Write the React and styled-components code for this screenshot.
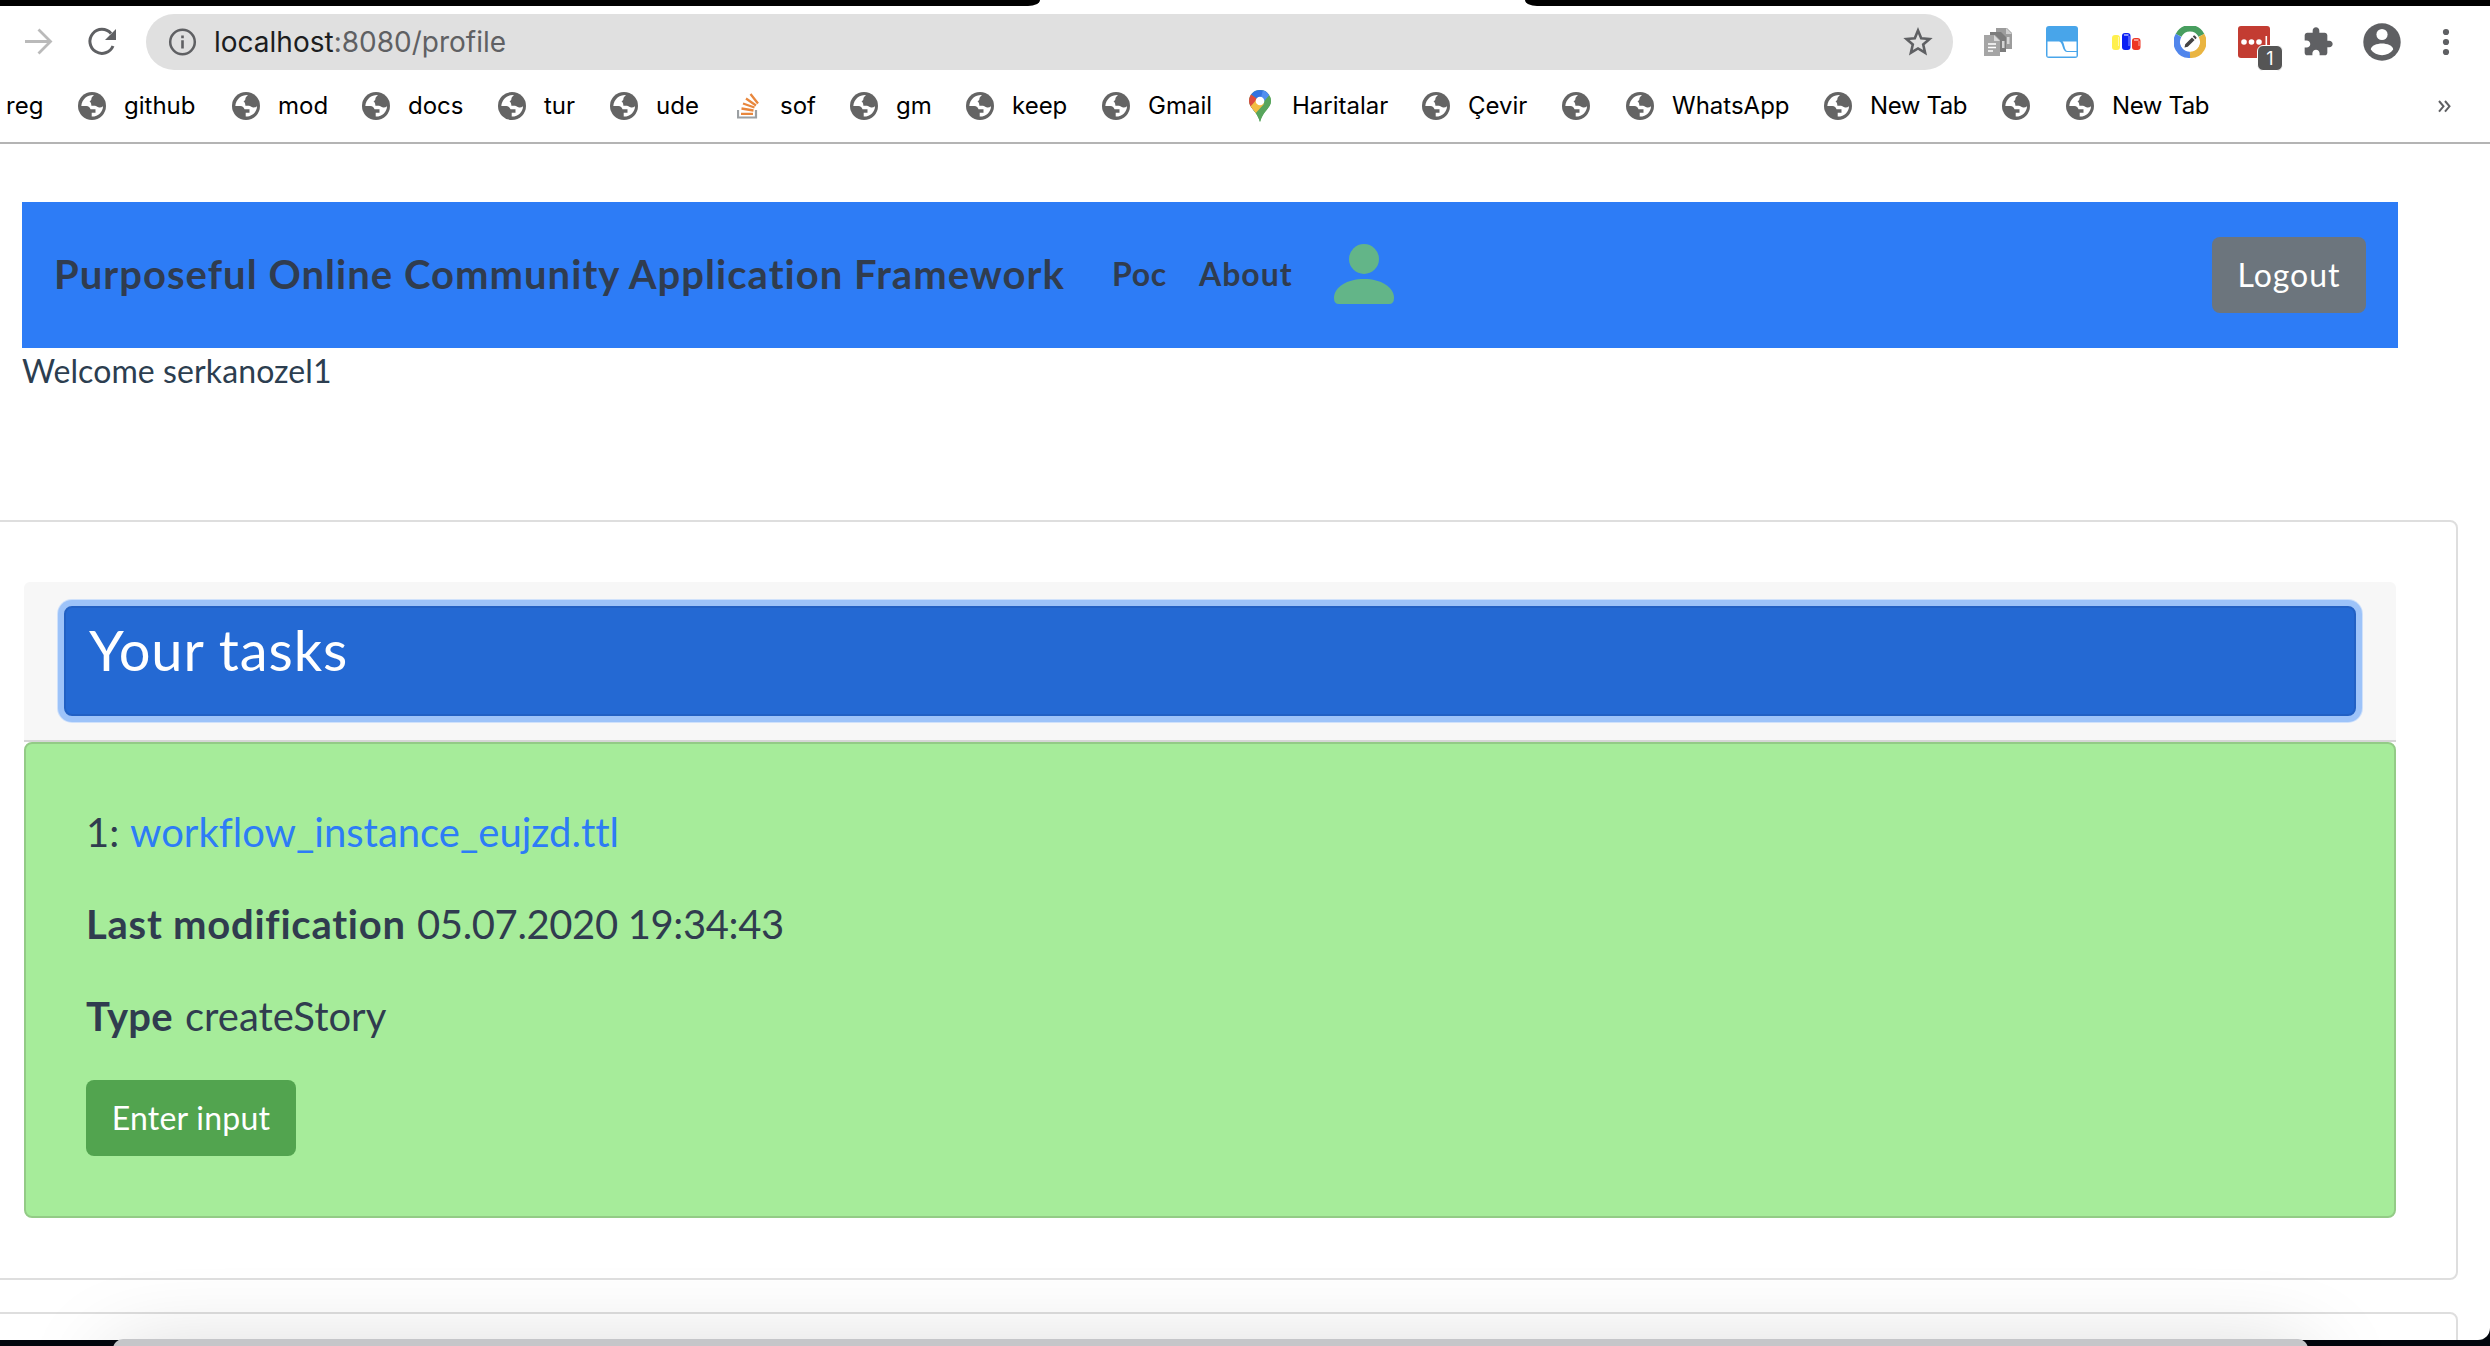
import React from "react";
import styled, { createGlobalStyle, css } from "styled-components";

const GlobalStyle = createGlobalStyle`
  * { box-sizing: border-box; }
  html, body { margin: 0; padding: 0; background: #000; overflow: hidden; }
  p, h1, h2 { margin: 0; font-weight: 400; }
  svg { display: block; flex: none; }
`;

const chromeFont = css`font-family: Inter, "Liberation Sans", sans-serif;`;
const pageFont = css`
  font-family: Lato, "Open Sans", sans-serif;
  font-variant-ligatures: none;
`;

const Screen = styled.div`
  position: relative;
  width: 2490px;
  height: 1346px;
  overflow: hidden;
  background: #02060d;
`;
const Browser = styled.div`
  height: 1340px;
  overflow: hidden;
  background: #fff;
  border-bottom-right-radius: 12px;
`;
const TabStrip = styled.div`
  display: flex;
  justify-content: space-between;
  height: 6px;
`;
const StripPart = styled.div`
  width: ${(p) => p.$w}px;
  background: #000;
  border-radius: ${(p) => (p.$left ? "0 0 12px 0 / 0 0 6px 0" : "0 0 0 12px / 0 0 0 6px")};
`;
const Toolbar = styled.div`
  display: flex;
  align-items: center;
  height: 72px;
`;
const NavButtons = styled.div`
  display: flex;
  align-items: center;
  width: 146px;
  padding-left: 22px;
  gap: 32px;
`;
const AddressBar = styled.div`
  ${chromeFont}
  display: flex;
  align-items: center;
  width: 1807px;
  height: 56px;
  padding: 0 19px 0 22px;
  border-radius: 28px;
  background: #e0e0e0;
  font-size: 28px;
  color: #5f6063;
`;
const Url = styled.div`
  flex: 1;
  padding-left: 17px;
  span { color: #1c1d20; }
`;
const Extensions = styled.div`
  display: flex;
  align-items: center;
  padding-left: 27px;
  gap: 28px;
`;
const ExtensionSlot = styled.div`
  position: relative;
  display: flex;
  align-items: center;
  justify-content: center;
  width: 36px;
  height: 38px;
`;
const Badge = styled.div`
  ${chromeFont}
  position: absolute;
  left: 21px;
  top: 22px;
  width: 26px;
  height: 26px;
  border: 1px solid #fff;
  border-radius: 6px;
  background: #555;
  color: #fff;
  font-size: 18px;
  line-height: 25px;
  text-align: center;
`;
const Bookmarks = styled.div`
  ${chromeFont}
  display: flex;
  align-items: center;
  height: 64px;
  padding: 0 0 8px 6px;
  font-size: 24px;
  color: #000;
`;
const Bookmark = styled.div`
  display: flex;
  align-items: center;
  flex: none;
  width: ${(p) => p.$w}px;
  letter-spacing: ${(p) => p.$ls || 0}px;
  white-space: nowrap;
`;
const BookmarkLabel = styled.span`
  padding-bottom: 2px;
`;
const Favicon = styled.div`
  display: flex;
  justify-content: center;
  width: 28px;
  margin: 0 18px 0 -1px;
`;
const Divider = styled.div`
  height: 2px;
  background: #b4b4b4;
`;
const Page = styled.div`
  ${pageFont}
  color: #2c3e50;
  font-size: 32px;
  line-height: 48px;
`;
const Navbar = styled.nav`
  display: flex;
  align-items: center;
  width: 2376px;
  height: 146px;
  margin: 58px 0 0 22px;
  padding: 0 32px 2px;
  background: #2d7cf6;
  font-weight: 700;
  color: #303c4f;
`;
const Brand = styled.div`
  width: 1058px;
  font-size: 40px;
  letter-spacing: ${(p) => p.$ls}px;
  white-space: nowrap;
`;
const NavLink = styled.div`
  width: ${(p) => p.$w}px;
  letter-spacing: ${(p) => p.$ls}px;
`;
const Spacer = styled.div`flex: 1;`;
const Button = styled.button`
  ${pageFont}
  display: flex;
  align-items: center;
  justify-content: center;
  width: ${(p) => p.$w}px;
  height: 76px;
  padding: 0 0 2px;
  border: 0;
  border-radius: 8px;
  background: ${(p) => p.$bg};
  color: #fff;
  font-size: 32px;
  font-weight: 400;
  letter-spacing: ${(p) => p.$ls}px;
`;
const NavAction = styled.div`
  padding-top: 2px;
`;
const Welcome = styled.p`
  height: 48px;
  padding-left: 22px;
  line-height: 46px;
  letter-spacing: ${(p) => p.$ls}px;
`;
const Card = styled.section`
  width: 2468px;
  height: ${(p) => p.$h}px;
  margin: ${(p) => p.$mt}px 0 0 -10px;
  padding: 60px 60px 0 32px;
  border: 2px solid #dedede;
  border-radius: 8px;
`;
const CardHeader = styled.header`
  height: 160px;
  padding: 24px 40px 0;
  border-bottom: 2px solid #d6d6d6;
  border-radius: 6px 6px 0 0;
  background: #f7f7f7;
`;
const TasksToggle = styled.div`
  height: 110px;
  padding: 8px 23px;
  border: 2px solid #2160c4;
  border-radius: 8px;
  background: #2469d3;
  box-shadow: 0 0 0 6px #9dc3f9, 0 0 0 7px #cfe1fb;
`;
const TasksTitle = styled.h2`
  font-size: 56px;
  line-height: 67px;
  letter-spacing: ${(p) => p.$ls}px;
  color: #fff;
`;
const TaskPanel = styled.div`
  display: flex;
  flex-direction: column;
  height: 476px;
  padding: 60px 60px 0;
  border: 2px solid #93cb86;
  border-radius: 8px;
  background: #a6ec9a;
`;
const TaskLine = styled.p`
  display: flex;
  height: 60px;
  margin-bottom: 32px;
  font-size: 40px;
  line-height: 56px;
  white-space: nowrap;
`;
const Cell = styled.span`
  width: ${(p) => p.$w || 600}px;
  font-weight: ${(p) => (p.$bold ? 700 : 400)};
  letter-spacing: ${(p) => p.$ls || 0}px;
  color: ${(p) => (p.$link ? "#2d7cf6" : "#303c4f")};
`;
const WindowBehind = styled.div`
  position: absolute;
  left: 113px;
  top: 1339px;
  width: 2195px;
  height: 60px;
  border-radius: 10px;
  background: #c5c6c9;
  box-shadow: 0 20px 90px rgba(0, 0, 0, 0.22);
`;

const Globe = () => (
  <svg width="28" height="28" viewBox="0 0 28 28">
    <circle cx="14" cy="14" r="14" fill="#646464" />
    <path d="M16 3C10 2.600 4 6.500 3.300 14H8.500C10.500 14.200 12 15.500 12.500 17.300H17.500V20.700H13.700V24.600C20.500 24.700 25 19.500 25 14.200C23.500 15.400 22 15.600 20.400 15.200C18.500 14.700 18.200 13.700 17 13.700H13.400C13.400 11 12.300 9.700 11.500 9.200C13 8.800 13.300 8.200 13.400 6.800C13.500 5.300 14.500 4.500 16 3Z" fill="#fff" />
  </svg>
);
const StackIcon = () => (
  <svg width="22" height="28" viewBox="0 0 22 26">
    <g fill="none">
      <path d="M1 17V24.500H19V17" stroke="#9b9fa2" strokeWidth="2.200" />
      <path d="M4 20.800H16M4.500 15.500L16.500 17.500M6 10.500L17.500 14.500M9 5.500L19 12.500M13.500 1L21 10.500" stroke="#e8873d" strokeWidth="2.300" />
    </g>
  </svg>
);
const MapsIcon = () => (
  <svg width="22" height="32" viewBox="0 0 22 32">
    <clipPath id="pin"><path d="M11 0C5 0 0 4.800 0 11C0 18 8 21 11 32C14 21 22 18 22 11C22 4.800 17 0 11 0Z" /></clipPath>
    <g clipPath="url(#pin)">
      <path d="M0 0H22V32H0Z" fill="#58a55c" />
      <path d="M0 3L11 11L20 2L16 0H0Z" fill="#3273e0" />
      <path d="M11 11L14 0H22V3L1 28L0 18Z" fill="#4f8ff0" />
      <path d="M22 4V32H0L4 20L16 13Z" fill="#58a55c" />
      <path d="M0 3L11 11L2 21H0Z" fill="#dc4b3e" />
      <path d="M1 17L9 8L15 14L5 25Z" fill="#f2bd42" />
    </g>
    <circle cx="11" cy="11" r="4.300" fill="#fff" />
  </svg>
);
const ForwardIcon = () => (
  <svg width="32" height="32" viewBox="0 0 32 32" fill="none" stroke="#bababa" strokeWidth="2.800">
    <path d="M3 15.500H28M16.500 3.500L28.500 15.500L16.500 27.500" />
  </svg>
);
const ReloadIcon = () => (
  <svg width="32" height="32" viewBox="0 0 32 32">
    <path d="M27 20A12 12 0 1 1 25 7.500" fill="none" stroke="#5f6063" strokeWidth="3" />
    <path d="M30 3V14H19Z" fill="#5f6063" />
  </svg>
);
const InfoIcon = () => (
  <svg width="29" height="28" viewBox="0 0 29 28">
    <circle cx="14.500" cy="14" r="12.300" fill="none" stroke="#5f6063" strokeWidth="2.500" />
    <path d="M13.200 12.300H15.800V20.500H13.200ZM13.200 7.500H15.800V10.200H13.200Z" fill="#5f6063" />
  </svg>
);
const StarIcon = () => (
  <svg width="32" height="32" viewBox="0 0 32 32">
    <path d="M16 4.500L19.200 12.300L27.500 13L21.200 18.500L23.100 26.700L16 22.400L8.900 26.700L10.800 18.500L4.500 13L12.800 12.300Z" fill="none" stroke="#5f6063" strokeWidth="2.600" />
  </svg>
);
const PagesIcon = () => (
  <svg width="28" height="28" viewBox="0 0 28 28">
    <path d="M12 0H23L28 5V21H12Z" fill="#9c9c9c" />
    <path d="M22 0V6H28Z" fill="#cfcfcf" />
    <path d="M6 4H17L22 9V24H6Z" fill="#7c7c7c" />
    <path d="M18 13H20.500V20H18ZM23 9H25.500V16H23Z" fill="#d5d5d5" />
    <path d="M0 7H11L16 12V28H0Z" fill="#a5a5a5" />
    <path d="M10 7V13H16Z" fill="#d8d8d8" />
    <path d="M4 16H12M4 19.500H12M4 23H9" stroke="#fff" strokeWidth="1.500" />
  </svg>
);
const PanelIcon = () => (
  <svg width="32" height="32" viewBox="0 0 32 32">
    <rect width="32" height="32" rx="3" fill="#48a5ea" />
    <path d="M1.500 15.500H13C17 15.500 16 26 21 26H30.500V30.500H1.500Z" fill="#fff" />
    <path d="M16.500 15.500H30.500V25H21.500C18.500 25 18.500 17 16.500 15.500Z" fill="#fff" />
  </svg>
);
const BarsIcon = () => (
  <svg width="29" height="18" viewBox="0 0 29 18">
    <rect y="2" width="8" height="15" rx="3" fill="#fff04d" />
    <rect x="10" width="8.500" height="17" rx="3" fill="#0a1ff5" />
    <rect x="20" y="5" width="8.500" height="12" rx="3" fill="#ee3524" />
    <path d="M12 2H16.500M22 7H26.500" stroke="#fff" strokeWidth="1" />
    <path d="M17 3V13M27 8V13M6.500 4V13" stroke="#fff" strokeWidth=".8" opacity=".7" />
  </svg>
);
const RingIcon = () => (
  <svg width="32" height="32" viewBox="0 0 32 32">
    <g fill="none" strokeWidth="6.500">
      <path d="M4.600 9.400A12.750 12.750 0 0 1 27.400 9.400" stroke="#489e5f" />
      <path d="M27.400 9.400A12.750 12.750 0 0 1 16 28.750" stroke="#eab541" />
      <path d="M16 28.750A12.750 12.750 0 0 1 4.600 9.400" stroke="#5186ec" />
    </g>
    <circle cx="16" cy="16" r="9.500" fill="#fff" />
    <path d="M10.500 21.500L11.200 18.200L18 11.400L20.600 14L13.800 20.800ZM18.800 10.600L19.800 9.600Q20.300 9.200 20.800 9.600L22.400 11.200Q22.800 11.700 22.400 12.200L21.400 13.200Z" fill="#444" />
  </svg>
);
const DotsBoxIcon = () => (
  <svg width="32" height="32" viewBox="0 0 32 32">
    <rect width="32" height="32" rx="3" fill="#c33c32" />
    <g fill="#fff">
      <circle cx="6" cy="16" r="2.800" />
      <circle cx="13.500" cy="16" r="2.800" />
      <circle cx="21" cy="16" r="2.800" />
      <rect x="27.500" y="10" width="1.600" height="12" />
    </g>
  </svg>
);
const PuzzleIcon = () => (
  <svg width="32" height="32" viewBox="0 0 24 24">
    <path d="M20.500 11H19V7c0-1.100-.9-2-2-2h-4V3.500C13 2.120 11.880 1 10.500 1S8 2.120 8 3.500V5H4c-1.100 0-1.990.9-1.990 2v3.800H3.500c1.490 0 2.700 1.210 2.700 2.700s-1.210 2.700-2.700 2.700H2V20c0 1.100.9 2 2 2h3.800v-1.500c0-1.490 1.210-2.700 2.700-2.700 1.490 0 2.700 1.210 2.700 2.700V22H17c1.100 0 2-.9 2-2v-4h1.500c1.380 0 2.500-1.120 2.500-2.500S21.880 11 20.500 11z" fill="#5f6063" />
  </svg>
);
const AvatarIcon = () => (
  <svg width="38" height="38" viewBox="0 0 38 38">
    <circle cx="19" cy="19" r="18.700" fill="#5f6063" />
    <circle cx="19" cy="11.500" r="5.600" fill="#fff" />
    <path d="M7.800 26.500C8 22.500 14 20.500 19 20.500S30 22.500 30.200 26.500C25 34 13 34 7.800 26.500Z" fill="#fff" />
  </svg>
);
const MenuIcon = () => (
  <svg width="8" height="28" viewBox="0 0 8 28" fill="#5f6063">
    <circle cx="4" cy="4" r="3.100" />
    <circle cx="4" cy="14" r="3.100" />
    <circle cx="4" cy="24" r="3.100" />
  </svg>
);
const ChevronsIcon = () => (
  <svg width="13" height="13" viewBox="0 0 13 13" fill="none" stroke="#5f6063" strokeWidth="2">
    <path d="M1 1L5.500 6.300L1 11.600M7 1L11.500 6.300L7 11.600" />
  </svg>
);
const ProfileIcon = () => (
  <svg width="60" height="60" viewBox="0 0 60 60" fill="#63b588">
    <circle cx="30" cy="15" r="15" />
    <path d="M0 54C0 43 13 35 30 35S60 43 60 54Q60 60 55 60H5Q0 60 0 54Z" />
  </svg>
);

const bookmarks = [
  { label: "reg", w: 73, icon: null },
  { label: "github", w: 154 },
  { label: "mod", w: 130 },
  { label: "docs", w: 136 },
  { label: "tur", w: 112 },
  { label: "ude", w: 124 },
  { label: "sof", w: 116, icon: StackIcon },
  { label: "gm", w: 116 },
  { label: "keep", w: 136 },
  { label: "Gmail", w: 144 },
  { label: "Haritalar", w: 176, icon: MapsIcon },
  { label: "Çevir", w: 140 },
  { label: "", w: 64 },
  { label: "WhatsApp", w: 198 },
  { label: "New Tab", w: 178, ls: -0.4 },
  { label: "", w: 64 },
  { label: "New Tab", w: 371, ls: -0.4 },
];

const extensions = [PagesIcon, PanelIcon, BarsIcon, RingIcon, DotsBoxIcon, PuzzleIcon, AvatarIcon, MenuIcon];

export default function App() {
  return (
    <Screen>
      <GlobalStyle />
      <Browser>
        <TabStrip>
          <StripPart $w={1040} $left />
          <StripPart $w={965} />
        </TabStrip>
        <Toolbar>
          <NavButtons>
            <ForwardIcon />
            <ReloadIcon />
          </NavButtons>
          <AddressBar>
            <InfoIcon />
            <Url><span>localhost</span>:8080/profile</Url>
            <StarIcon />
          </AddressBar>
          <Extensions>
            {extensions.map((Icon, i) => (
              <ExtensionSlot key={i}>
                <Icon />
                {Icon === DotsBoxIcon && <Badge>1</Badge>}
              </ExtensionSlot>
            ))}
          </Extensions>
        </Toolbar>
        <Bookmarks>
          {bookmarks.map(({ label, w, ls, icon: Icon = Globe }, i) => (
            <Bookmark key={i} $w={w} $ls={ls}>
              {Icon && <Favicon><Icon /></Favicon>}
              <BookmarkLabel>{label}</BookmarkLabel>
            </Bookmark>
          ))}
          <ChevronsIcon />
        </Bookmarks>
        <Divider />
        <Page>
          <Navbar>
            <Brand $ls={1.03}>Purposeful Online Community Application Framework</Brand>
            <NavLink $w={87} $ls={0.6}>Poc</NavLink>
            <NavLink $w={135} $ls={1}>About</NavLink>
            <ProfileIcon />
            <Spacer />
            <NavAction>
              <Button $w={154} $bg="#6c757d" $ls={1}>Logout</Button>
            </NavAction>
          </Navbar>
          <Welcome $ls={0.1}>Welcome serkanozel1</Welcome>
          <Card $mt={124} $h={760}>
            <CardHeader>
              <TasksToggle>
                <TasksTitle $ls={0.9}>Your tasks</TasksTitle>
              </TasksToggle>
            </CardHeader>
            <TaskPanel>
              <TaskLine>
                <Cell $w={44}>1:</Cell>
                <Cell $link>workflow_instance_eujzd.ttl</Cell>
              </TaskLine>
              <TaskLine>
                <Cell $w={331} $bold $ls={0.75}>Last modification</Cell>
                <Cell $ls={-0.37}>05.07.2020 19:34:43</Cell>
              </TaskLine>
              <TaskLine>
                <Cell $w={99} $bold $ls={0.3}>Type</Cell>
                <Cell>createStory</Cell>
              </TaskLine>
              <Button $w={210} $bg="#52a44f" $ls={0.25}>Enter input</Button>
            </TaskPanel>
          </Card>
          <Card $mt={32} $h={760} />
        </Page>
      </Browser>
      <WindowBehind />
    </Screen>
  );
}
